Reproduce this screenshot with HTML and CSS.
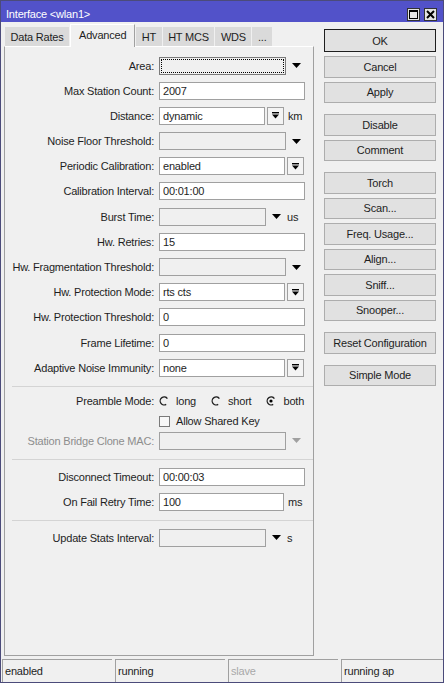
FILE: index.html
```html
<!DOCTYPE html>
<html lang="en">
<head>
    <meta charset="UTF-8">
    <meta name="viewport" content="width=device-width, initial-scale=1.0">
    <title>Interface &lt;wlan1&gt;</title>
    <link rel="stylesheet" href="styles.css">
</head>
<body>
    <div class="window">
        <div class="titlebar">
            <span class="title">Interface &lt;wlan1&gt;</span>
            <div class="title-buttons">
                <span class="tbtn">
                    <svg width="11" height="11" viewBox="0 0 11 11"><rect x="1.5" y="1.5" width="8" height="8" fill="none" stroke="#000" stroke-width="1"/><rect x="1" y="1" width="9" height="2" fill="#000"/></svg>
                </span>
                <span class="tbtn">
                    <svg width="11" height="11" viewBox="0 0 11 11"><path d="M2 2 L9 9 M9 2 L2 9" stroke="#000" stroke-width="2"/></svg>
                </span>
            </div>
        </div>

        <div class="content">
            <div class="main">
                <div class="tabs">
                    <div class="tab">Data Rates</div>
                    <div class="tab active">Advanced</div>
                    <div class="tab">HT</div>
                    <div class="tab">HT MCS</div>
                    <div class="tab">WDS</div>
                    <div class="tab">...</div>
                </div>

                <div class="panel">
                    <div class="section first">
                        <div class="row">
                            <label>Area:</label>
                            <div class="field">
                                <input type="text" class="w-arrow box-off focus" value="">
                                <svg class="tri" width="9" height="5" viewBox="0 0 9 5"><path d="M0 0 H9 L4.5 5 Z" fill="#000"/></svg>
                            </div>
                        </div>
                        <div class="row">
                            <label>Max Station Count:</label>
                            <div class="field"><input type="text" class="w-full" value="2007"></div>
                        </div>
                        <div class="row">
                            <label>Distance:</label>
                            <div class="field">
                                <input type="text" class="w-unit-btn" value="dynamic">
                                <span class="drop"><svg width="7" height="7" viewBox="0 0 7 7"><rect x="0" y="0" width="7" height="1.4" fill="#000"/><path d="M0 2.6 H7 L3.5 6.6 Z" fill="#000"/></svg></span>
                                <span class="unit">km</span>
                            </div>
                        </div>
                        <div class="row">
                            <label>Noise Floor Threshold:</label>
                            <div class="field">
                                <input type="text" class="w-arrow box-off" value="">
                                <svg class="tri" width="9" height="5" viewBox="0 0 9 5"><path d="M0 0 H9 L4.5 5 Z" fill="#000"/></svg>
                            </div>
                        </div>
                        <div class="row">
                            <label>Periodic Calibration:</label>
                            <div class="field">
                                <input type="text" class="w-btn" value="enabled">
                                <span class="drop"><svg width="7" height="7" viewBox="0 0 7 7"><rect x="0" y="0" width="7" height="1.4" fill="#000"/><path d="M0 2.6 H7 L3.5 6.6 Z" fill="#000"/></svg></span>
                            </div>
                        </div>
                        <div class="row">
                            <label>Calibration Interval:</label>
                            <div class="field"><input type="text" class="w-full" value="00:01:00"></div>
                        </div>
                        <div class="row">
                            <label>Burst Time:</label>
                            <div class="field">
                                <input type="text" class="w-unit-arrow box-off" value="">
                                <svg class="tri tri-unit" width="9" height="5" viewBox="0 0 9 5"><path d="M0 0 H9 L4.5 5 Z" fill="#000"/></svg>
                                <span class="unit">us</span>
                            </div>
                        </div>
                        <div class="row">
                            <label>Hw. Retries:</label>
                            <div class="field"><input type="text" class="w-full" value="15"></div>
                        </div>
                        <div class="row">
                            <label>Hw. Fragmentation Threshold:</label>
                            <div class="field">
                                <input type="text" class="w-arrow box-off" value="">
                                <svg class="tri" width="9" height="5" viewBox="0 0 9 5"><path d="M0 0 H9 L4.5 5 Z" fill="#000"/></svg>
                            </div>
                        </div>
                        <div class="row">
                            <label>Hw. Protection Mode:</label>
                            <div class="field">
                                <input type="text" class="w-btn" value="rts cts">
                                <span class="drop"><svg width="7" height="7" viewBox="0 0 7 7"><rect x="0" y="0" width="7" height="1.4" fill="#000"/><path d="M0 2.6 H7 L3.5 6.6 Z" fill="#000"/></svg></span>
                            </div>
                        </div>
                        <div class="row">
                            <label>Hw. Protection Threshold:</label>
                            <div class="field"><input type="text" class="w-full" value="0"></div>
                        </div>
                        <div class="row">
                            <label>Frame Lifetime:</label>
                            <div class="field"><input type="text" class="w-full" value="0"></div>
                        </div>
                        <div class="row">
                            <label>Adaptive Noise Immunity:</label>
                            <div class="field">
                                <input type="text" class="w-btn" value="none">
                                <span class="drop"><svg width="7" height="7" viewBox="0 0 7 7"><rect x="0" y="0" width="7" height="1.4" fill="#000"/><path d="M0 2.6 H7 L3.5 6.6 Z" fill="#000"/></svg></span>
                            </div>
                        </div>
                    </div>

                    <div class="sep"></div>

                    <div class="section tight">
                        <div class="row">
                            <label>Preamble Mode:</label>
                            <div class="field radios">
                                <span class="radio"><svg width="10" height="10" viewBox="0 0 10 10"><path d="M8.4 2.6 A4 4 0 1 0 7.2 8.4" fill="none" stroke="#222" stroke-width="1.3"/></svg>long</span>
                                <span class="radio"><svg width="10" height="10" viewBox="0 0 10 10"><path d="M8.4 2.6 A4 4 0 1 0 7.2 8.4" fill="none" stroke="#222" stroke-width="1.3"/></svg>short</span>
                                <span class="radio"><svg width="10" height="10" viewBox="0 0 10 10"><path d="M8.4 2.6 A4 4 0 1 0 7.2 8.4" fill="none" stroke="#222" stroke-width="1.3"/><circle cx="5" cy="5" r="1.6" fill="#000"/></svg>both</span>
                            </div>
                        </div>
                        <div class="row">
                            <label></label>
                            <div class="field">
                                <span class="check"></span>
                                <span>Allow Shared Key</span>
                            </div>
                        </div>
                        <div class="row disabled">
                            <label>Station Bridge Clone MAC:</label>
                            <div class="field">
                                <input type="text" class="w-arrow box-off" value="">
                                <svg class="tri" width="9" height="5" viewBox="0 0 9 5"><path d="M0 0 H9 L4.5 5 Z" fill="#a0a0a0"/></svg>
                            </div>
                        </div>
                    </div>

                    <div class="sep"></div>

                    <div class="section">
                        <div class="row">
                            <label>Disconnect Timeout:</label>
                            <div class="field"><input type="text" class="w-full" value="00:00:03"></div>
                        </div>
                        <div class="row">
                            <label>On Fail Retry Time:</label>
                            <div class="field">
                                <input type="text" class="w-unit" value="100">
                                <span class="unit">ms</span>
                            </div>
                        </div>
                    </div>

                    <div class="sep"></div>

                    <div class="section">
                        <div class="row">
                            <label>Update Stats Interval:</label>
                            <div class="field">
                                <input type="text" class="w-unit-arrow box-off" value="">
                                <svg class="tri tri-unit" width="9" height="5" viewBox="0 0 9 5"><path d="M0 0 H9 L4.5 5 Z" fill="#000"/></svg>
                                <span class="unit">s</span>
                            </div>
                        </div>
                    </div>
                </div>
            </div>

            <div class="actions">
                <button class="default">OK</button>
                <button>Cancel</button>
                <button>Apply</button>
                <button class="group">Disable</button>
                <button>Comment</button>
                <button class="group">Torch</button>
                <button>Scan...</button>
                <button>Freq. Usage...</button>
                <button>Align...</button>
                <button>Sniff...</button>
                <button>Snooper...</button>
                <button class="group">Reset Configuration</button>
                <button class="group">Simple Mode</button>
            </div>
        </div>

        <div class="statusbar">
            <div>enabled</div>
            <div>running</div>
            <div class="dim">slave</div>
            <div class="last">running ap</div>
        </div>
    </div>
</body>
</html>
```

FILE: styles.css
```css
* {
    margin: 0;
    padding: 0;
    box-sizing: border-box;
}

body {
    width: 444px;
    height: 683px;
    font-family: 'Liberation Sans', Arial, sans-serif;
    font-size: 11px;
    letter-spacing: -0.2px;
    color: #1e1e1e;
    background: #f0f0f0;
    overflow: hidden;
}

.window {
    height: 683px;
    border: 1px solid #4b4b7a;
    display: flex;
    flex-direction: column;
    background: #f0f0f0;
}

/* title bar */
.titlebar {
    height: 21px;
    background: #5252c9;
    color: #fff;
    display: flex;
    align-items: center;
    justify-content: space-between;
    padding: 5px 6px 0 5px;
}

.title-buttons {
    display: flex;
    gap: 4px;
}

.tbtn {
    width: 13px;
    height: 13px;
    background: #e4e4e4;
    border: 1px solid #333;
    display: flex;
    align-items: center;
    justify-content: center;
}

/* main area */
.content {
    display: flex;
    gap: 10px;
    padding: 2px 0 0 3px;
}

.main {
    width: 310px;
}

.tabs {
    display: flex;
    gap: 1px;
    height: 22px;
    padding-left: 1px;
    position: relative;
    z-index: 1;
}

.tab {
    margin-top: 3px;
    height: 19px;
    padding: 0 5.5px;
    background: #dadada;
    display: flex;
    align-items: center;
}

.tab.active {
    margin-top: 0;
    height: 23px;
    padding: 0 8px 3px;
    background: #f0f0f0;
    border-left: 1px solid #fff;
    border-top: 1px solid #fff;
    border-right: 1px solid #a0a0a0;
}

.panel {
    height: 610px;
    border: 1px solid #a0a0a0;
    border-top-color: #fff;
    padding-top: 9.5px;
}

.section {
    display: flex;
    flex-direction: column;
    gap: 7.2px;
    padding-top: 7.5px;
}

.section.first {
    padding-top: 0;
}

.section.tight {
    gap: 1.75px;
    padding-top: 5px;
}

.sep {
    height: 1px;
    background: #d4d4d4;
    margin: 9.5px 0 0 7px;
}

.row {
    display: flex;
    align-items: center;
    height: 18px;
}

.row label {
    width: 149px;
    text-align: right;
}

.row.disabled label {
    color: #8d8d8d;
}

.field {
    margin-left: 5px;
    display: flex;
    align-items: center;
    height: 18px;
}

.field input {
    height: 18px;
    border: 1px solid #a0a0a0;
    background: #fff;
    padding: 0 3px;
    font: inherit;
    letter-spacing: inherit;
    color: inherit;
    outline: none;
}

.field input.box-off {
    background: #f0f0f0;
}

.field input.focus {
    border-color: #7a7a7a;
    outline: 1px dotted #000;
    outline-offset: -3px;
}

.w-full { width: 146px; }
.w-arrow { width: 127px; }
.w-btn { width: 126px; }
.w-unit-btn { width: 106px; }
.w-unit-arrow { width: 107px; }
.w-unit { width: 125px; }

.tri {
    margin-left: 6px;
}

.tri-unit {
    margin-left: 6px;
}

.drop {
    width: 17px;
    height: 18px;
    margin-left: 2px;
    border: 1px solid #a0a0a0;
    background: #f4f4f4;
    display: flex;
    align-items: center;
    justify-content: center;
}

.unit {
    margin-left: 4px;
}

.tri-unit + .unit {
    margin-left: 6px;
}

.radios {
    gap: 15px;
}

.radio {
    display: flex;
    align-items: center;
    gap: 7px;
}

.check {
    width: 11px;
    height: 11px;
    border: 1px solid #7a7a7a;
    background: #f8f8f8;
    margin-right: 6px;
}

/* right side buttons */
.actions {
    width: 112px;
    padding-top: 5px;
    display: flex;
    flex-direction: column;
}

.actions button {
    height: 21.5px;
    margin-bottom: 4px;
    background: #e1e1e1;
    border: 1px solid #adadad;
    font: inherit;
    letter-spacing: inherit;
    color: #1e1e1e;
}

.actions button.default {
    height: 23px;
    border-color: #1e1e1e;
}

.actions button.group {
    margin-top: 7px;
}

/* status bar */
.statusbar {
    display: flex;
    gap: 3px;
    height: 24px;
    margin-top: 2px;
    padding: 1px 0 0 1px;
}

.statusbar div {
    width: 110px;
    border-top: 1px solid #a0a0a0;
    border-left: 1px solid #a0a0a0;
    padding-left: 2px;
    display: flex;
    align-items: center;
}

.statusbar .dim {
    color: #a8a8a8;
}

.statusbar .last {
    flex: 1;
}
```
